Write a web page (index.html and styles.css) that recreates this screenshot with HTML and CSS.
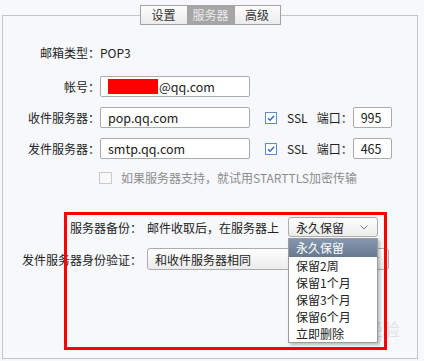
FILE: index.html
```html
<!DOCTYPE html>
<html lang="zh-CN">
<head>
    <meta charset="UTF-8">
    <title>服务器设置</title>
    <link rel="stylesheet" href="styles.css">
</head>
<body>
    <div class="page">
        <div class="panel">
            <div class="tabs">
                <span class="tab">设置</span><span class="tab active">服务器</span><span class="tab">高级</span>
            </div>

            <div class="form">
                <div class="row row-type">
                    <span class="label">邮箱类型：</span>
                    <span class="value">POP3</span>
                </div>
                <div class="row">
                    <span class="label">帐号：</span>
                    <div class="field field-wide"><span class="redact"></span>@qq.com</div>
                </div>
                <div class="row">
                    <span class="label">收件服务器：</span>
                    <div class="field field-wide">pop.qq.com</div>
                    <svg class="check" width="12" height="12" viewBox="0 0 12 12"><rect x="0.5" y="0.5" width="11" height="11" fill="#fff" stroke="#5b8ecb"/><path d="M3 6.2 L5.1 8.3 L9.1 3.8" fill="none" stroke="#2f6db3" stroke-width="1.4"/></svg>
                    <span class="ssl">SSL</span>
                    <span class="port-label">端口：</span>
                    <div class="field field-port">995</div>
                </div>
                <div class="row">
                    <span class="label">发件服务器：</span>
                    <div class="field field-wide">smtp.qq.com</div>
                    <svg class="check" width="12" height="12" viewBox="0 0 12 12"><rect x="0.5" y="0.5" width="11" height="11" fill="#fff" stroke="#5b8ecb"/><path d="M3 6.2 L5.1 8.3 L9.1 3.8" fill="none" stroke="#2f6db3" stroke-width="1.4"/></svg>
                    <span class="ssl">SSL</span>
                    <span class="port-label">端口：</span>
                    <div class="field field-port">465</div>
                </div>
                <div class="row row-tls">
                    <span class="label"></span>
                    <span class="check-off"></span>
                    <span class="muted">如果服务器支持，就试用STARTTLS加密传输</span>
                </div>
            </div>

            <div class="backup">
                <div class="row2 row2-top">
                    <span class="label2">服务器备份：</span>
                    <span>邮件收取后，在服务器上</span>
                    <div class="select-wrap">
                        <div class="select select-small">
                            <span>永久保留</span>
                            <svg width="8" height="5" viewBox="0 0 8 5"><polyline points="0.5,0.5 4,4 7.5,0.5" fill="none" stroke="#7a7a7a"/></svg>
                        </div>
                        <ul class="dropdown">
                            <li class="selected">永久保留</li>
                            <li>保留2周</li>
                            <li>保留1个月</li>
                            <li>保留3个月</li>
                            <li>保留6个月</li>
                            <li>立即删除</li>
                        </ul>
                    </div>
                </div>
                <div class="row2">
                    <span class="label2">发件服务器身份验证：</span>
                    <div class="select select-wide">
                        <span>和收件服务器相同</span>
                        <svg width="8" height="5" viewBox="0 0 8 5"><polyline points="0.5,0.5 4,4 7.5,0.5" fill="none" stroke="#7a7a7a"/></svg>
                    </div>
                </div>
            </div>

            <!-- red annotation frame -->
            <div class="annot"></div>
            <span class="watermark">du经验</span>
        </div>
    </div>
</body>
</html>
```

FILE: styles.css
```css
body {
    margin: 0;
    background: #f7f8fc;
    font-family: "Noto Sans CJK SC", sans-serif;
    font-size: 12px;
    color: #222;
}

.page {
    padding: 15px 6px 0 2px;
}

.panel {
    position: relative;
    height: 344px;
    box-sizing: border-box;
    border: 1px solid #c4c5c9;
}

/* Tabs */
.tabs {
    display: flex;
    justify-content: center;
    margin-top: -11px;
}

.tab {
    width: 48px;
    height: 20px;
    box-sizing: border-box;
    border: 1px solid #a3a3a3;
    background: linear-gradient(#fdfdfd, #ebebeb);
    text-align: center;
    line-height: 18px;
    color: #333;
}

.tab + .tab {
    margin-left: -1px;
}

.tab:last-child {
    width: 47px;
}

.tab.active {
    background: #a6a6a6;
    color: #ececec;
}

/* Upper form */
.form {
    padding-top: 17px;
}

.row {
    display: flex;
    align-items: center;
    height: 21px;
    margin-bottom: 10px;
}

.row-type {
    margin-bottom: 13px;
}

.row-tls {
    height: 17px;
    margin-bottom: 0;
}

.label {
    width: 97px;
    flex-shrink: 0;
    text-align: right;
}

.field {
    height: 21px;
    box-sizing: border-box;
    border: 1px solid #ababab;
    border-radius: 2px;
    background: #fff;
    padding-left: 7px;
    line-height: 19px;
    font-size: 12.5px;
    display: flex;
    align-items: center;
}

.field-wide {
    width: 150px;
}

.field-port {
    width: 39px;
}

.redact {
    display: inline-block;
    width: 50px;
    height: 15px;
    background: #ff0000;
    margin-right: 1px;
}

.check {
    margin-left: 15px;
    flex-shrink: 0;
}

.ssl {
    margin-left: 10px;
}

.port-label {
    margin-left: 9px;
}

.check-off {
    width: 13px;
    height: 12px;
    box-sizing: border-box;
    border: 1px solid #cacaca;
    background: #f9f9f9;
    margin-left: -1px;
}

.muted {
    margin-left: 9px;
    color: #8c8c8c;
}

/* Backup section */
.backup {
    margin-top: 31px;
}

.row2 {
    display: flex;
    align-items: center;
    height: 22px;
}

.row2-top {
    height: 20px;
    margin-bottom: 11px;
}

.label2 {
    width: 139px;
    flex-shrink: 0;
    text-align: right;
    margin-right: 5px;
}

.select-wrap {
    position: relative;
    margin-left: 9px;
}

.select {
    display: flex;
    align-items: center;
    justify-content: space-between;
    box-sizing: border-box;
    border: 1px solid #acacac;
    border-radius: 3px;
    background: linear-gradient(#fefefe, #ececec);
    padding: 0 9px 0 7px;
}

.select-small {
    width: 90px;
    height: 20px;
}

.select-wide {
    width: 242px;
    height: 22px;
}

.dropdown {
    position: absolute;
    left: 0;
    top: 21px;
    z-index: 2;
    width: 90px;
    box-sizing: border-box;
    margin: 0;
    padding: 0;
    list-style: none;
    border: 1px solid #9d9d9d;
    background: #fff;
    box-shadow: 2px 2px 3px rgba(0, 0, 0, 0.25);
}

.dropdown li {
    height: 17px;
    line-height: 17px;
    padding-left: 7px;
}

.dropdown li.selected {
    height: 18px;
    line-height: 18px;
    background: linear-gradient(#8497ae, #66798f);
    color: #fff;
}

.annot {
    position: absolute;
    left: 61px;
    top: 196px;
    width: 323px;
    height: 138px;
    box-sizing: border-box;
    border: 3px solid #ff0000;
    z-index: 3;
}

.watermark {
    position: absolute;
    left: 342px;
    top: 300px;
    font-size: 17px;
    color: rgba(196, 202, 212, 0.5);
    z-index: 1;
}
```
